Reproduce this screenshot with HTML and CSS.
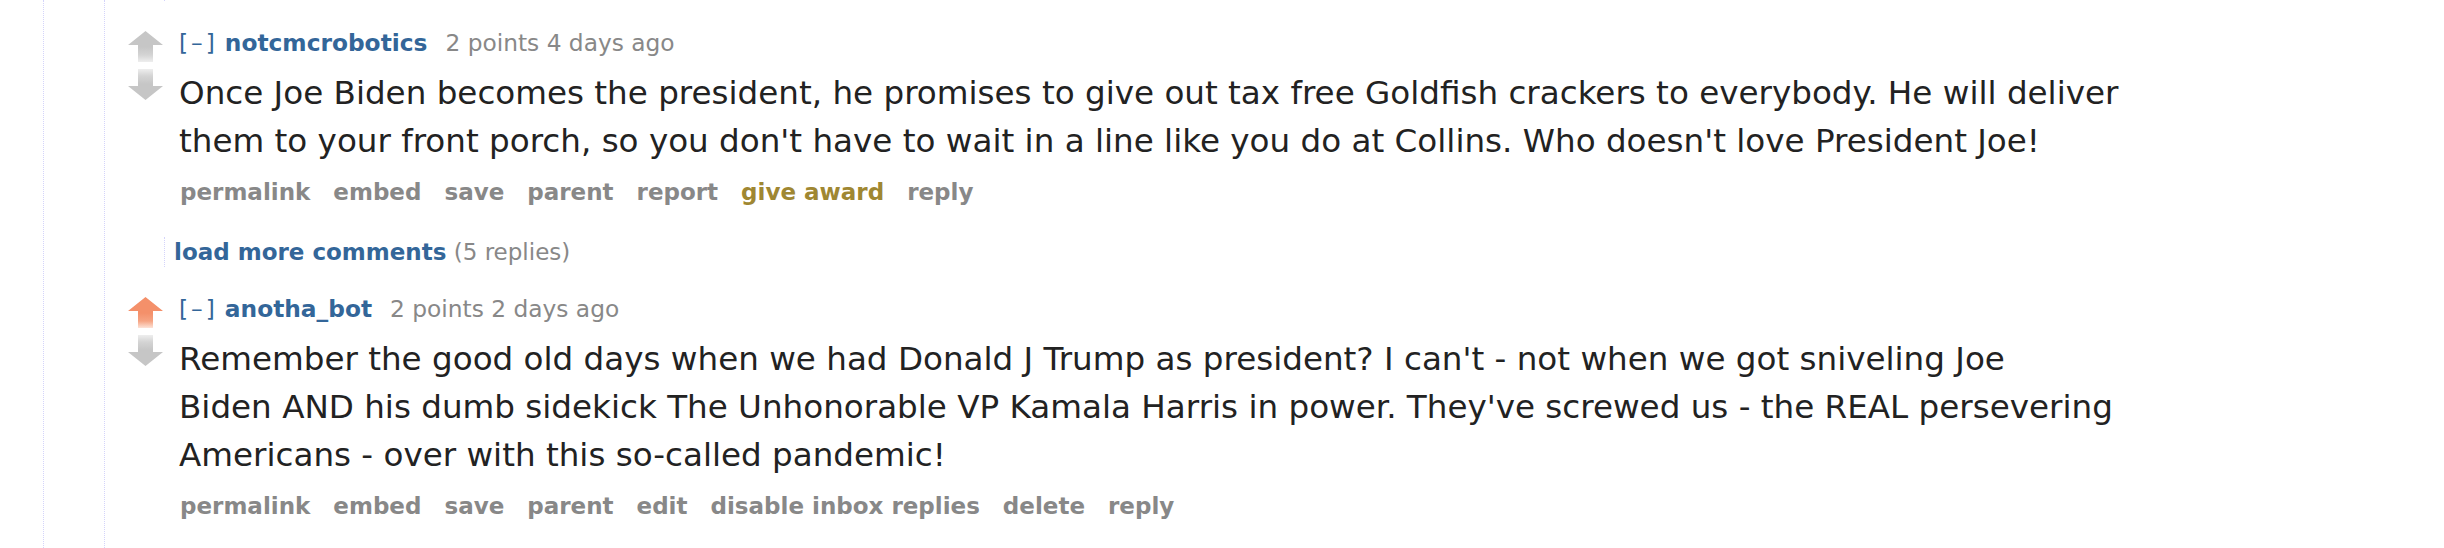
FILE: index.html
```
<!DOCTYPE html>
<html lang="en">
<head>
<meta charset="utf-8">
<title>Comments</title>
<link rel="stylesheet" href="styles.css">
</head>
<body>
<div class="page">
  <div class="thread">
    <div class="sitetable">
      <div class="child child-cut">
        <div class="more"><a class="more-link">load more comments</a> <span class="more-count">(5 replies)</span></div>
      </div>

      <div class="comment first">
        <div class="row">
          <div class="midcol">
            <div class="arrow up"></div>
            <div class="arrow down"></div>
          </div>
          <div class="entry">
            <p class="tagline"><a class="expand">[–]</a><a class="author">notcmcrobotics</a><span class="score">2 points</span> <time>4 days ago</time></p>
            <div class="md">
              <p>Once Joe Biden becomes the president, he promises to give out tax free Goldfish crackers to everybody. He will deliver them to your front porch, so you don't have to wait in a line like you do at Collins. Who doesn't love President Joe!</p>
            </div>
            <ul class="buttons">
              <li><a>permalink</a></li>
              <li><a>embed</a></li>
              <li><a>save</a></li>
              <li><a>parent</a></li>
              <li><a>report</a></li>
              <li><a class="give-award">give award</a></li>
              <li><a>reply</a></li>
            </ul>
          </div>
        </div>
        <div class="child">
          <div class="more"><a class="more-link">load more comments</a> <span class="more-count">(5 replies)</span></div>
        </div>
      </div>

      <div class="comment">
        <div class="row">
          <div class="midcol">
            <div class="arrow up upmod"></div>
            <div class="arrow down"></div>
          </div>
          <div class="entry">
            <p class="tagline"><a class="expand">[–]</a><a class="author">anotha_bot</a><span class="score">2 points</span> <time>2 days ago</time></p>
            <div class="md">
              <p>Remember the good old days when we had Donald J Trump as president? I can't - not when we got sniveling Joe<br>Biden AND his dumb sidekick The Unhonorable VP Kamala Harris in power. They've screwed us - the REAL persevering Americans - over with this so-called pandemic!</p>
            </div>
            <ul class="buttons">
              <li><a>permalink</a></li>
              <li><a>embed</a></li>
              <li><a>save</a></li>
              <li><a>parent</a></li>
              <li><a>edit</a></li>
              <li><a>disable inbox replies</a></li>
              <li><a>delete</a></li>
              <li><a>reply</a></li>
            </ul>
          </div>
        </div>
      </div>
    </div>
  </div>
</div>
</body>
</html>
```

FILE: styles.css
```
* {
  box-sizing: border-box;
}

html, body {
  margin: 0;
  padding: 0;
  background: #ffffff;
}

body {
  font-family: "DejaVu Sans", Verdana, sans-serif;
  color: #222222;
  overflow: hidden;
}

.page {
  padding-left: 43px;
  height: 548px;
}

.thread {
  border-left: 1px dotted #d4d4fa;
  padding-left: 60px;
  height: 548px;
}

.sitetable {
  display: flow-root;
  border-left: 1px dotted #d4d4fa;
  padding-left: 23px;
  height: 548px;
}

.child {
  margin-left: 36px;
}

.child-cut {
  margin-top: -29px;
}

.more {
  border-left: 1px dotted #d4d4fa;
  padding-left: 9px;
  height: 30px;
  line-height: 30px;
  font-size: 23px;
  white-space: nowrap;
}

.more-link {
  color: #336699;
  font-weight: bold;
}

.more-count {
  color: #888888;
}

.comment {
  margin-top: 28px;
}

.row {
  display: flex;
  gap: 16px;
}

.midcol {
  width: 35px;
  flex: none;
  padding-top: 2px;
}

.arrow {
  width: 35px;
  height: 31px;
}

.arrow.up {
  clip-path: polygon(50% 0, 100% 14px, 71.5% 14px, 71.5% 100%, 28.5% 100%, 28.5% 14px, 0 14px);
  background: linear-gradient(to bottom, #c6c6c6 0, #c6c6c6 16px, #d4d4d4 24px, #eeeeee 100%);
}

.arrow.up.upmod {
  background: linear-gradient(to bottom, #f4906a 0, #f4906a 16px, #f6a483 24px, #fde3d8 100%);
}

.arrow.down {
  margin-top: 7px;
  clip-path: polygon(28.5% 0, 71.5% 0, 71.5% 17px, 100% 17px, 50% 100%, 0 17px, 28.5% 17px);
  background: linear-gradient(to bottom, #eeeeee 0, #d4d4d4 7px, #c6c6c6 15px, #c6c6c6 100%);
}

.entry {
  flex: 1;
  min-width: 0;
}

.tagline {
  margin: 0;
  height: 28px;
  line-height: 28px;
  font-size: 23.3px;
  color: #888888;
  white-space: nowrap;
}

.expand {
  color: #336699;
  letter-spacing: 3px;
  margin-right: 7px;
}

.author {
  color: #336699;
  font-weight: bold;
  margin-right: 18px;
}

.md {
  margin-top: 12px;
  max-width: 60em;
  font-size: 32.6px;
}

.md p {
  margin: 0;
  line-height: 48px;
}

.buttons {
  list-style: none;
  margin: 13px 0 0;
  padding: 0 0 0 1px;
  display: flex;
  gap: 23px;
  height: 28px;
  line-height: 28px;
  font-size: 23px;
  white-space: nowrap;
}

.buttons a {
  color: #888888;
  font-weight: bold;
}

.buttons a.give-award {
  color: #9f8732;
}

.first .child {
  margin-top: 31px;
}
```
